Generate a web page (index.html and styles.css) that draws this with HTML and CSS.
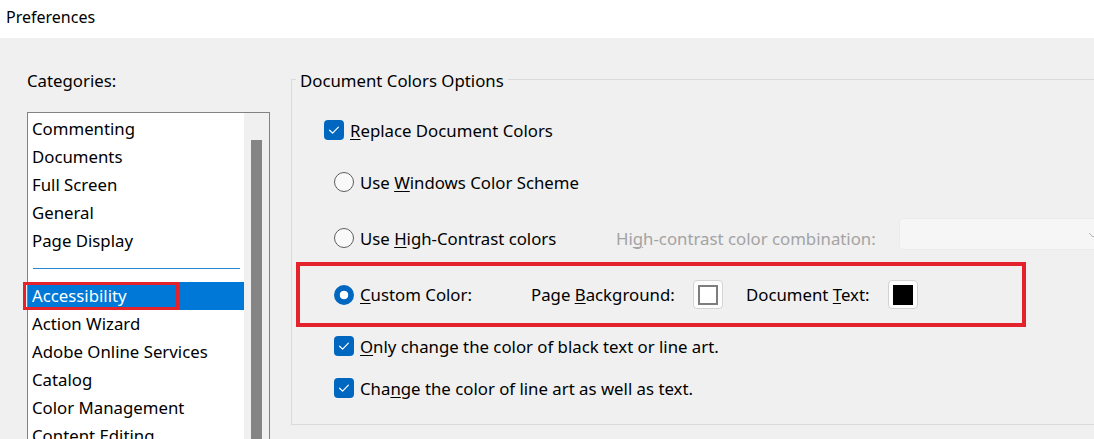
FILE: index.html
```html
<!DOCTYPE html>
<html>
<head>
<meta charset="utf-8">
<link rel="stylesheet" href="styles.css">
</head>
<body>
<div class="titlebar">Preferences</div>
<div class="main">
  <div class="cats">
    <div class="cats-label">Categories:</div>
    <div class="listbox">
      <ul class="items">
        <li>Commenting</li>
        <li>Documents</li>
        <li>Full Screen</li>
        <li>General</li>
        <li>Page Display</li>
        <li class="sep"></li>
        <li class="sel">Accessibility<span class="mark"></span></li>
        <li>Action Wizard</li>
        <li>Adobe Online Services</li>
        <li>Catalog</li>
        <li>Color Management</li>
        <li>Content Editing</li>
      </ul>
      <div class="scroll"><div class="thumb"></div></div>
    </div>
  </div>
  <fieldset class="group">
    <legend>Document Colors Options</legend>
    <div class="opt opt-first ind-check">
      <span class="check"><svg viewBox="0 0 20 20" width="20" height="20"><path d="M5.6 10.2 L8.6 13.1 L14.4 7.2" fill="none" stroke="#fff" stroke-width="1.2" stroke-linecap="round" stroke-linejoin="round"/></svg></span>
      <span class="lbl"><u>R</u>eplace Document Colors</span>
    </div>
    <div class="opt opt-gap ind-radio">
      <span class="radio"></span>
      <span class="lbl">Use <u>W</u>indows Color Scheme</span>
    </div>
    <div class="opt opt-gap2 ind-radio">
      <span class="cell-hc"><span class="radio"></span><span class="lbl">Use <u>H</u>igh-Contrast colors</span></span>
      <span class="disabled">Hi<u>g</u>h-contrast color combination:</span>
      <span class="combo"><svg class="chev" viewBox="0 0 10 6" width="10" height="6"><path d="M1 1 L5 5 L9 1" fill="none" stroke="#b5b5b5" stroke-width="1"/></svg></span>
    </div>
    <div class="custom">
      <span class="cell-cc"><span class="radio on"></span><span class="lbl"><u>C</u>ustom Color:</span></span>
      <span class="lbl lbl-pb">Page <u>B</u>ackground:</span>
      <span class="swatch"><span class="chip chip-white"></span></span>
      <span class="lbl lbl-dt">Document <u>T</u>ext:</span>
      <span class="swatch"><span class="chip chip-black"></span></span>
    </div>
    <div class="opt opt-after ind-radio">
      <span class="check"><svg viewBox="0 0 20 20" width="20" height="20"><path d="M5.6 10.2 L8.6 13.1 L14.4 7.2" fill="none" stroke="#fff" stroke-width="1.2" stroke-linecap="round" stroke-linejoin="round"/></svg></span>
      <span class="lbl"><u>O</u>nly change the color of black text or line art.</span>
    </div>
    <div class="opt opt-last ind-radio">
      <span class="check"><svg viewBox="0 0 20 20" width="20" height="20"><path d="M5.6 10.2 L8.6 13.1 L14.4 7.2" fill="none" stroke="#fff" stroke-width="1.2" stroke-linecap="round" stroke-linejoin="round"/></svg></span>
      <span class="lbl">Cha<u>n</u>ge the color of line art as well as text.</span>
    </div>
  </fieldset>
</div>
</body>
</html>
```
FILE: styles.css
```css
html, body {
  margin: 0;
  padding: 0;
}
body {
  width: 1094px;
  height: 439px;
  overflow: hidden;
  background: #f0f0f0;
  font-family: "Noto Sans", "Open Sans", sans-serif;
  font-size: 16.8px;
  color: #000;
}
u {
  text-decoration-thickness: 1px;
  text-underline-offset: 2px;
}
.titlebar {
  height: 38px;
  background: #fff;
  padding-left: 6px;
  line-height: 34px;
  font-size: 16px;
  box-sizing: border-box;
}
.main {
  display: flex;
  align-items: flex-start;
  padding-left: 27px;
}
.cats {
  width: 243px;
  flex: none;
}
.cats-label {
  margin-top: 32px;
  line-height: 22px;
}
.listbox {
  margin-top: 20px;
  height: 360px;
  border: 1px solid #828282;
  background: #fff;
  display: flex;
  box-sizing: border-box;
}
.items {
  list-style: none;
  margin: 0;
  padding: 2px 0 0 0;
  width: 216px;
  flex: none;
}
.items li {
  height: 28px;
  line-height: 28px;
  padding-left: 4px;
  white-space: nowrap;
}
.items li.sep {
  height: 27px;
  display: flex;
  align-items: center;
  padding: 0 4px 0 5px;
}
.items li.sep::before {
  content: "";
  display: block;
  flex: 1;
  height: 1px;
  background: #2a86cf;
}
.items li.sel {
  background: #0078d7;
  color: #fff;
  position: relative;
}
.mark {
  position: absolute;
  left: -5px;
  top: 0px;
  width: 156px;
  height: 28px;
  border: 3px solid #e3222b;
  box-sizing: border-box;
}
.scroll {
  flex: 1;
  background: #f0f0f0;
  padding-top: 27px;
  display: flex;
  justify-content: center;
}
.thumb {
  width: 11px;
  height: 320px;
  background: #858585;
}
.group {
  flex: none;
  margin: 29px 0 0 21px;
  padding: 0 0 22px 0;
  width: 830px;
  border: 1px solid #dadada;
  min-width: 0;
}
.group legend {
  margin-left: 4px;
  padding: 4px 4px 0 4px;
  line-height: 20px;
}
.opt {
  display: flex;
  align-items: center;
  height: 28px;
  white-space: nowrap;
}
.opt-first { margin-top: 25px; }
.opt-gap { margin-top: 24px; }
.opt-gap2 { margin-top: 28px; }
.opt-after { margin-top: 5px; }
.opt-last { margin-top: 14px; }
.ind-check { margin-left: 32px; }
.ind-radio { margin-left: 42px; }
.check {
  width: 20px;
  height: 20px;
  border-radius: 4px;
  background: #0067c0;
  flex: none;
  display: block;
}
.check svg { display: block; }
.radio {
  width: 18px;
  height: 18px;
  border-radius: 50%;
  border: 1px solid #5e5e5e;
  background: #f9f9f9;
  flex: none;
  display: block;
}
.radio.on {
  width: 20px;
  height: 20px;
  border: none;
  background: radial-gradient(circle, #fff 0 4px, #0067c0 4.6px);
}
.lbl {
  margin-left: 6px;
}
.cell-hc, .cell-cc {
  display: flex;
  align-items: center;
  flex: none;
}
.cell-hc { width: 282px; }
.cell-cc { width: 197px; }
.disabled {
  color: #a3a3a3;
  width: 283px;
  flex: none;
}
.combo {
  flex: none;
  width: 200px;
  height: 32px;
  margin-top: -8px;
  box-sizing: border-box;
  background: #f6f6f6;
  border: 1px solid #ebebeb;
  border-radius: 4px;
  position: relative;
}
.chev {
  position: absolute;
  left: 188px;
  top: 13px;
}
.custom {
  margin: 10px 0 0 4px;
  width: 730px;
  height: 65px;
  box-sizing: border-box;
  border: 4px solid #e3222b;
  padding-left: 34px;
  display: flex;
  align-items: center;
  white-space: nowrap;
}
.custom .lbl-pb {
  margin-left: 0;
  width: 162px;
  flex: none;
}
.custom .lbl-dt {
  margin-left: 23px;
  width: 142px;
  flex: none;
}
.swatch {
  width: 30px;
  height: 29px;
  box-sizing: border-box;
  border: 1px solid #d3d3d3;
  border-radius: 4px;
  background: #fdfdfd;
  display: flex;
  align-items: center;
  justify-content: center;
  flex: none;
}
.chip {
  width: 20px;
  height: 20px;
  box-sizing: border-box;
  display: block;
}
.chip-white {
  background: #fff;
  border: 2px solid #7d7d7d;
}
.chip-black {
  background: #000;
}
```
